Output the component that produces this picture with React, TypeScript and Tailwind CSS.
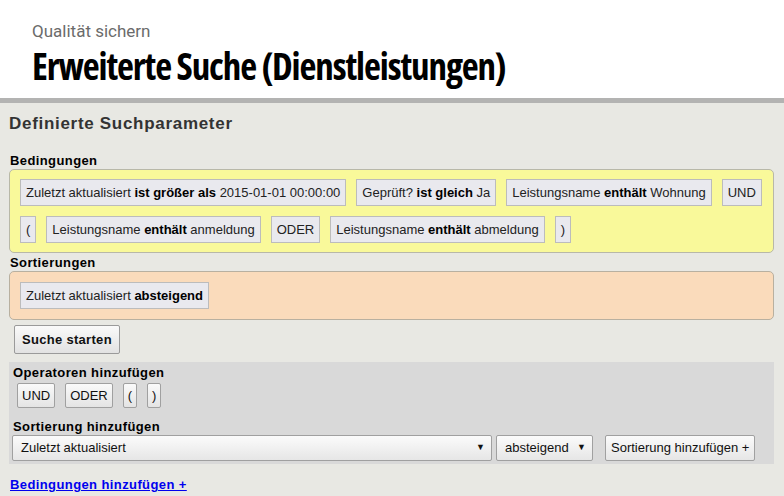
import React from "react";

// Chips for conditions / sort entries
type Part = { t: string; b?: boolean };

function Chip({ parts }: { parts: Part[] }) {
  return (
    <span className="inline-flex items-center h-[27px] px-[5px] bg-[#e9e9ee] border border-[#bcbcbc] text-[13px] text-[#222] whitespace-pre">
      {parts.map((p, i) =>
        p.b ? (
          <b key={i} className="font-bold text-black">
            {p.t}
          </b>
        ) : (
          <span key={i}>{p.t}</span>
        )
      )}
    </span>
  );
}

function Btn({ children }: { children: React.ReactNode }) {
  return (
    <button className="h-[25px] px-[4px] border border-[#a0a0a0] rounded-[2px] bg-linear-to-b from-[#fafafa] to-[#e4e4e4] text-[13px] text-[#111]">
      {children}
    </button>
  );
}

function Select({ value, className }: { value: string; className: string }) {
  return (
    <div
      className={
        "h-[26px] flex items-center justify-between pl-[8px] pr-[6px] border border-[#a0a0a0] rounded-[2px] bg-linear-to-b from-[#fbfbfb] to-[#e6e6e6] text-[13px] text-[#111] " +
        className
      }
    >
      <span>{value}</span>
      <span className="text-[9px]">▼</span>
    </div>
  );
}

export default function App() {
  return (
    <div className="min-h-screen bg-[#e8e8e3] font-['Liberation_Sans',Arial,sans-serif]">
      <header className="bg-white h-[103px] pl-[32px] pt-[24px] border-b-[5px] border-[#b3b3b2]">
        <div className="text-[17px] leading-[14px] text-[#6b6b6b] font-['Roboto',sans-serif]">Qualität sichern</div>
        <h1 className="mt-[6px] text-[37px] leading-[44px] font-bold text-black tracking-[-1.1px] font-['Open_Sans',sans-serif] font-stretch-condensed">
          Erweiterte Suche (Dienstleistungen)
        </h1>
      </header>

      <main className="px-[9px] pt-[10px]">
        <h2 className="text-[17px] leading-[22px] font-bold text-[#333] tracking-[0.7px]">Definierte Suchparameter</h2>

        <div className="mt-[18px] text-[13px] leading-[15px] font-bold text-black tracking-[0.4px] pl-[1px]">Bedingungen</div>
        <div className="mt-[1px] w-[765px] border border-[#b8b8a8] rounded-[5px] bg-[#f9f99a] pl-[10px] pt-[9px] pb-[9px] flex flex-col gap-[10px]">
          <div className="flex gap-[10px]">
            <Chip parts={[{ t: "Zuletzt aktualisiert " }, { t: "ist größer als", b: true }, { t: " 2015-01-01 00:00:00" }]} />
            <Chip parts={[{ t: "Geprüft? " }, { t: "ist gleich", b: true }, { t: " Ja" }]} />
            <Chip parts={[{ t: "Leistungsname " }, { t: "enthält", b: true }, { t: " Wohnung" }]} />
            <Chip parts={[{ t: "UND" }]} />
          </div>
          <div className="flex gap-[10px]">
            <Chip parts={[{ t: "(" }]} />
            <Chip parts={[{ t: "Leistungsname " }, { t: "enthält", b: true }, { t: " anmeldung" }]} />
            <Chip parts={[{ t: "ODER" }]} />
            <Chip parts={[{ t: "Leistungsname " }, { t: "enthält", b: true }, { t: " abmeldung" }]} />
            <Chip parts={[{ t: ")" }]} />
          </div>
        </div>

        <div className="mt-[2px] text-[13px] leading-[15px] font-bold text-black tracking-[0.4px] pl-[1px]">Sortierungen</div>
        <div className="mt-[1px] w-[765px] border border-[#b8b0a0] rounded-[5px] bg-[#fadbbb] pl-[10px] pt-[10px] pb-[10px] flex">
          <Chip parts={[{ t: "Zuletzt aktualisiert " }, { t: "absteigend", b: true }]} />
        </div>

        <div className="mt-[5px] pl-[5px]">
          <button className="h-[29px] px-[7px] border border-[#9a9a9a] rounded-[2px] bg-linear-to-b from-[#fafafa] to-[#e2e2e2] text-[13px] font-bold text-[#111] tracking-[0.3px]">
            Suche starten
          </button>
        </div>

        <section className="mt-[8px] w-[765px] bg-[#d9d9d9] pl-[4px] pt-[3px] pb-[3px]">
          <div className="text-[13px] leading-[16px] font-bold text-black tracking-[0.4px]">Operatoren hinzufügen</div>
          <div className="mt-[2px] pl-[4px] flex gap-[10px]">
            <Btn>UND</Btn>
            <Btn>ODER</Btn>
            <Btn>(</Btn>
            <Btn>)</Btn>
          </div>
          <div className="mt-[11px] text-[13px] leading-[15px] font-bold text-black tracking-[0.4px]">Sortierung hinzufügen</div>
          <div className="mt-[1px] -ml-[1px] flex items-center">
            <Select value="Zuletzt aktualisiert" className="w-[480px]" />
            <Select value="absteigend" className="ml-[4px] w-[97px]" />
            <button className="ml-[12px] h-[26px] px-[5px] border border-[#a0a0a0] rounded-[2px] bg-linear-to-b from-[#fbfbfb] to-[#e6e6e6] text-[13px] text-[#111]">
              Sortierung hinzufügen +
            </button>
          </div>
        </section>

        <a href="#" className="mt-[11px] inline-block pl-[1px] text-[13px] font-bold text-[#0000ee] underline tracking-[0.4px]">
          Bedingungen hinzufügen +
        </a>
      </main>
    </div>
  );
}
